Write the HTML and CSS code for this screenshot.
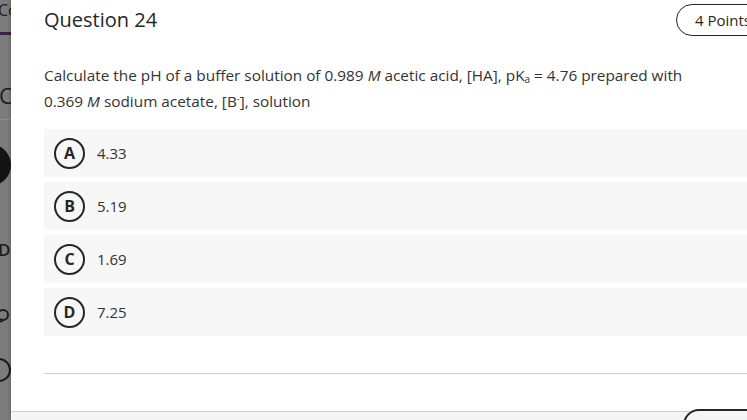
FILE: index.html
```html
<!DOCTYPE html>
<html>
<head>
<meta charset="utf-8">
<link rel="stylesheet" href="styles.css">
</head>
<body>
<div class="page">
  <aside class="sidebar">
    <div class="sb-co">Co</div>
    <div class="sb-bar"></div>
    <div class="sb-c">C</div>
    <div class="sb-rule"></div>
    <div class="sb-dot"></div>
    <div class="sb-d">D</div>
    <svg class="sb-person" width="16" height="22" viewBox="0 0 16 22"><circle cx="8" cy="7" r="5" fill="none" stroke="#1c1c1c" stroke-width="2"/><path d="M0 21 C1 15 4 13 8 13" fill="none" stroke="#1c1c1c" stroke-width="2"/></svg>
    <svg class="sb-check" width="24" height="24" viewBox="0 0 24 24"><circle cx="12" cy="12" r="11" fill="none" stroke="#1c1c1c" stroke-width="2"/><path d="M5 11 L9 15" fill="none" stroke="#1c1c1c" stroke-width="2"/></svg>
  </aside>
  <main class="panel">
    <div class="content">
      <header class="head">
        <h1 class="title">Question 24</h1>
        <div class="points">4 Points</div>
      </header>
      <p class="question">Calculate the pH of a buffer solution of 0.989 <i>M</i> acetic acid, [HA], pK<sub>a</sub> = 4.76 prepared with 0.369 <i>M</i> sodium acetate, [B<sup>-</sup>], solution</p>
      <ul class="options">
        <li class="option"><span class="letter">A</span><span class="val">4.33</span></li>
        <li class="option"><span class="letter">B</span><span class="val">5.19</span></li>
        <li class="option"><span class="letter">C</span><span class="val">1.69</span></li>
        <li class="option"><span class="letter">D</span><span class="val">7.25</span></li>
      </ul>
      <hr class="divider">
    </div>
    <footer class="footer">
      <div class="footer-btn"></div>
    </footer>
  </main>
</div>
</body>
</html>
```

FILE: styles.css
```css
html, body {
  margin: 0;
  padding: 0;
  width: 747px;
  height: 420px;
  overflow: hidden;
  font-family: "Open Sans", "Noto Sans", sans-serif;
}
.page {
  display: flex;
  width: 747px;
  height: 420px;
  overflow: hidden;
}
.sidebar {
  width: 11px;
  flex: none;
  background: #7c7c7c;
  overflow: hidden;
  display: flex;
  flex-direction: column;
  color: #1c1c1c;
}
.sb-co {
  font-size: 16px;
  line-height: 20px;
  margin: 0 0 0 -2px;
  white-space: nowrap;
}
.sb-bar {
  height: 3px;
  background: #3d1f4a;
  margin-top: 12px;
}
.sb-c {
  font-size: 22px;
  line-height: 26px;
  margin: 47px 0 0 -1px;
}
.sb-rule {
  height: 1px;
  background: #8c8c8c;
  margin-top: 11px;
}
.sb-dot {
  width: 42px;
  height: 42px;
  border-radius: 50%;
  background: #141414;
  margin: 24px 0 0 -31px;
  flex: none;
}
.sb-d {
  font-size: 17px;
  font-weight: 600;
  line-height: 20px;
  margin: 54px 0 0 -2px;
}
.sb-person {
  margin: 48px 0 0 -5px;
  flex: none;
}
.sb-check {
  margin: 28px 0 0 -13px;
  flex: none;
}
.panel {
  flex: 1;
  background: #fff;
  display: flex;
  flex-direction: column;
  min-width: 0;
  box-shadow: -2px 0 2px rgba(0,0,0,0.12);
}
.content {
  flex: 1;
  padding-left: 33px;
  overflow: hidden;
}
.head {
  display: flex;
  justify-content: space-between;
  align-items: flex-start;
  height: 40px;
}
.title {
  margin: 5px 0 0 0;
  font-size: 20px;
  line-height: 30px;
  font-weight: 500;
  color: #262626;
}
.points {
  margin-top: 4px;
  height: 30px;
  border: 1px solid #262626;
  border-radius: 16px 0 0 16px;
  padding: 0 14px 0 18px;
  font-size: 15px;
  line-height: 30px;
  color: #262626;
  white-space: nowrap;
  margin-right: -19px;
}
.question {
  margin: 22px 0 0 0;
  font-size: 15.35px;
  line-height: 26px;
  color: #333;
  padding-right: 40px;
}
.question sub {
  font-size: 10px;
  vertical-align: -2px;
  line-height: 0;
}
.question sup {
  font-size: 9px;
  vertical-align: 5px;
  line-height: 0;
}
.options {
  list-style: none;
  margin: 15px 0 0 0;
  padding: 0;
  display: flex;
  flex-direction: column;
  gap: 5px;
}
.option {
  height: 48px;
  background: #f7f7f7;
  display: flex;
  align-items: center;
  padding-left: 10px;
}
.letter {
  width: 27px;
  height: 27px;
  border: 2px solid #262626;
  border-radius: 50%;
  display: flex;
  align-items: center;
  justify-content: center;
  font-size: 16px;
  font-weight: 700;
  color: #262626;
  flex: none;
}
.val {
  margin-left: 12px;
  font-size: 15px;
  color: #333;
}
.divider {
  margin: 37px 0 0 0;
  border: 0;
  border-top: 1px solid #cfcfcf;
}
.footer {
  height: 8px;
  border-top: 1px solid #cfcfcf;
  background: #f5f5f5;
  position: relative;
}
.footer-btn {
  position: absolute;
  left: 672px;
  top: -3px;
  width: 120px;
  height: 30px;
  border: 2px solid #262626;
  border-radius: 16px;
  background: #f5f5f5;
}
```
